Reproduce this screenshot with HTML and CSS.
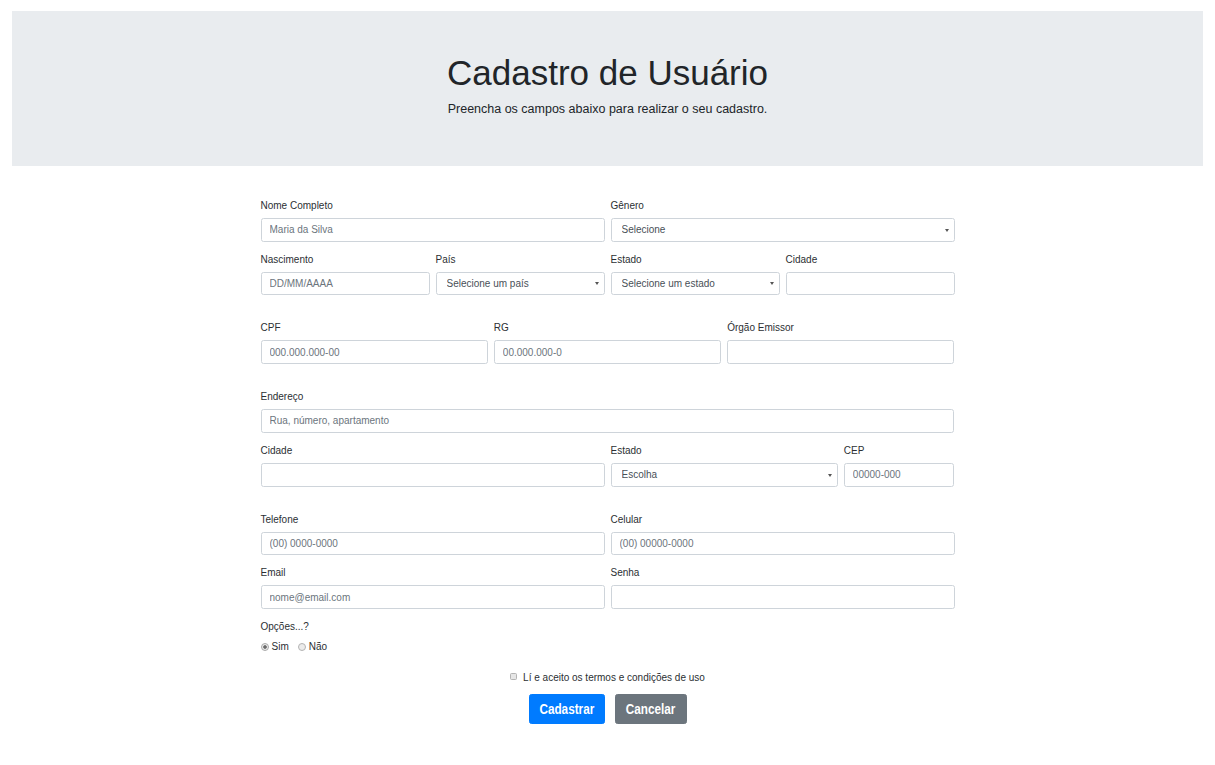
FILE: index.html
```html
<!DOCTYPE html>
<html lang="pt-BR">
<head>
<meta charset="utf-8">
<title>Cadastro de Usuário</title>
<link rel="stylesheet" href="styles.css">
</head>
<body>
<header class="hero">
  <h1 class="hero-title">Cadastro de Usuário</h1>
  <p class="hero-lead">Preencha os campos abaixo para realizar o seu cadastro.</p>
</header>

<form class="form">
  <div class="grid">
    <div class="field span-6">
      <label class="label">Nome Completo</label>
      <input class="input" type="text" placeholder="Maria da Silva">
    </div>
    <div class="field span-6">
      <label class="label">Gênero</label>
      <div class="select-wrap">
        <select class="input select"><option>Selecione</option></select>
      </div>
    </div>
    <div class="field span-3">
      <label class="label">Nascimento</label>
      <input class="input" type="text" placeholder="DD/MM/AAAA">
    </div>
    <div class="field span-3">
      <label class="label">País</label>
      <div class="select-wrap">
        <select class="input select"><option>Selecione um país</option></select>
      </div>
    </div>
    <div class="field span-3">
      <label class="label">Estado</label>
      <div class="select-wrap">
        <select class="input select"><option>Selecione um estado</option></select>
      </div>
    </div>
    <div class="field span-3">
      <label class="label">Cidade</label>
      <input class="input" type="text">
    </div>
  </div>

  <div class="grid">
    <div class="field span-4">
      <label class="label">CPF</label>
      <input class="input" type="text" placeholder="000.000.000-00">
    </div>
    <div class="field span-4">
      <label class="label">RG</label>
      <input class="input" type="text" placeholder="00.000.000-0">
    </div>
    <div class="field span-4">
      <label class="label">Órgão Emissor</label>
      <input class="input" type="text">
    </div>
  </div>

  <div class="grid">
    <div class="field span-12">
      <label class="label">Endereço</label>
      <input class="input" type="text" placeholder="Rua, número, apartamento">
    </div>
    <div class="field span-6">
      <label class="label">Cidade</label>
      <input class="input" type="text">
    </div>
    <div class="field span-4">
      <label class="label">Estado</label>
      <div class="select-wrap">
        <select class="input select"><option>Escolha</option></select>
      </div>
    </div>
    <div class="field span-2">
      <label class="label">CEP</label>
      <input class="input" type="text" placeholder="00000-000">
    </div>
  </div>

  <div class="grid grid-last">
    <div class="field span-6">
      <label class="label">Telefone</label>
      <input class="input" type="text" placeholder="(00) 0000-0000">
    </div>
    <div class="field span-6">
      <label class="label">Celular</label>
      <input class="input" type="text" placeholder="(00) 00000-0000">
    </div>
    <div class="field span-6">
      <label class="label">Email</label>
      <input class="input" type="email" placeholder="nome@email.com">
    </div>
    <div class="field span-6">
      <label class="label">Senha</label>
      <input class="input" type="password">
    </div>
    <div class="field span-12">
      <label class="label">Opções...?</label>
      <div class="radios">
        <label class="radio-opt"><input class="radio" type="radio" name="op" checked>Sim</label>
        <label class="radio-opt"><input class="radio" type="radio" name="op">Não</label>
      </div>
    </div>
  </div>

  <div class="terms">
    <label class="terms-label"><input class="check" type="checkbox">Lí e aceito os termos e condições de uso</label>
  </div>

  <div class="actions">
    <button class="btn btn-primary" type="submit"><span class="btn-text">Cadastrar</span></button>
    <button class="btn btn-secondary" type="button"><span class="btn-text">Cancelar</span></button>
  </div>
</form>
</body>
</html>
```

FILE: styles.css
```css
html, body {
  margin: 0;
  padding: 0;
}

body {
  font-family: "Liberation Sans", Arial, sans-serif;
  color: #212529;
  background: #fff;
}

.hero {
  margin: 11px 12px 0;
  background: #e9ecef;
  padding: 41px 20px 47px;
  text-align: center;
}

.hero-title {
  font-size: 35px;
  font-weight: 300;
  line-height: 42px;
  margin: 0 0 6px;
}

.hero-lead {
  font-size: 12.5px;
  line-height: 18.75px;
  margin: 0;
}

.form {
  width: 694px;
  margin: 32px auto 0;
}

.grid {
  display: grid;
  grid-template-columns: repeat(12, minmax(0, 1fr));
  column-gap: 6px;
  margin-bottom: 15px;
}

.grid-last {
  margin-bottom: 0;
}

.span-2 { grid-column: span 2; }
.span-3 { grid-column: span 3; }
.span-4 { grid-column: span 4; }
.span-6 { grid-column: span 6; }
.span-12 { grid-column: span 12; }

.field {
  margin-bottom: 10px;
  min-width: 0;
}

.label {
  display: block;
  font-size: 10px;
  line-height: 15px;
  margin-bottom: 5px;
  color: #2b2f33;
}

.input {
  display: block;
  width: 100%;
  box-sizing: border-box;
  height: 23.75px;
  margin: 0;
  border: 1px solid #ced4da;
  border-radius: 2.5px;
  padding: 0 8px;
  font-family: "Liberation Sans", Arial, sans-serif;
  font-size: 10px;
  color: #495057;
  background: #fff;
  outline: none;
}

.input::placeholder {
  color: #6c757d;
  opacity: 1;
}

.select-wrap {
  position: relative;
}

.select {
  -webkit-appearance: none;
  appearance: none;
  padding-left: 10px;
  padding-right: 16px;
}

.select-wrap::after {
  content: "";
  position: absolute;
  right: 6px;
  top: 50%;
  margin-top: -1px;
  border-left: 2px solid transparent;
  border-right: 2px solid transparent;
  border-top: 3px solid #555;
  pointer-events: none;
}

.radios {
  display: flex;
  align-items: center;
  font-size: 10px;
  line-height: 15px;
  color: #2b2f33;
}

.radio-opt {
  display: flex;
  align-items: center;
  margin-right: 9px;
}

.radio {
  -webkit-appearance: none;
  appearance: none;
  width: 8px;
  height: 8px;
  margin: 0 3px 0 0;
  border: 1px solid #b4b4b4;
  border-radius: 50%;
  background: #ececec;
  box-sizing: border-box;
}

.radio:checked {
  background: radial-gradient(circle at center, #6a6a6a 0, #6a6a6a 1.4px, #ececec 2.2px);
  border-color: #a8a8a8;
}

.terms {
  margin: 6px 0 9px;
  display: flex;
  justify-content: center;
  font-size: 10px;
  line-height: 15px;
  color: #2b2f33;
}

.terms-label {
  display: flex;
  align-items: center;
}

.check {
  -webkit-appearance: none;
  appearance: none;
  width: 7px;
  height: 7px;
  margin: -2px 6px 0 0;
  border: 1px solid #b4b4b4;
  border-radius: 1.5px;
  background: #e6e6e6;
  box-sizing: border-box;
}

.actions {
  display: flex;
  justify-content: center;
  gap: 10px;
}

.btn {
  display: flex;
  align-items: center;
  justify-content: center;
  height: 30px;
  padding: 0;
  border: 1px solid transparent;
  border-radius: 2.5px;
  font-family: "Liberation Sans", Arial, sans-serif;
  font-size: 14.5px;
  font-weight: bold;
  color: #fff;
  cursor: pointer;
  overflow: hidden;
}

.btn-text {
  display: inline-block;
  transform: scaleX(0.81);
  white-space: nowrap;
}

.btn-primary {
  width: 76px;
  background: #007bff;
  border-color: #007bff;
}

.btn-secondary {
  width: 72px;
  background: #6c757d;
  border-color: #6c757d;
}
```
